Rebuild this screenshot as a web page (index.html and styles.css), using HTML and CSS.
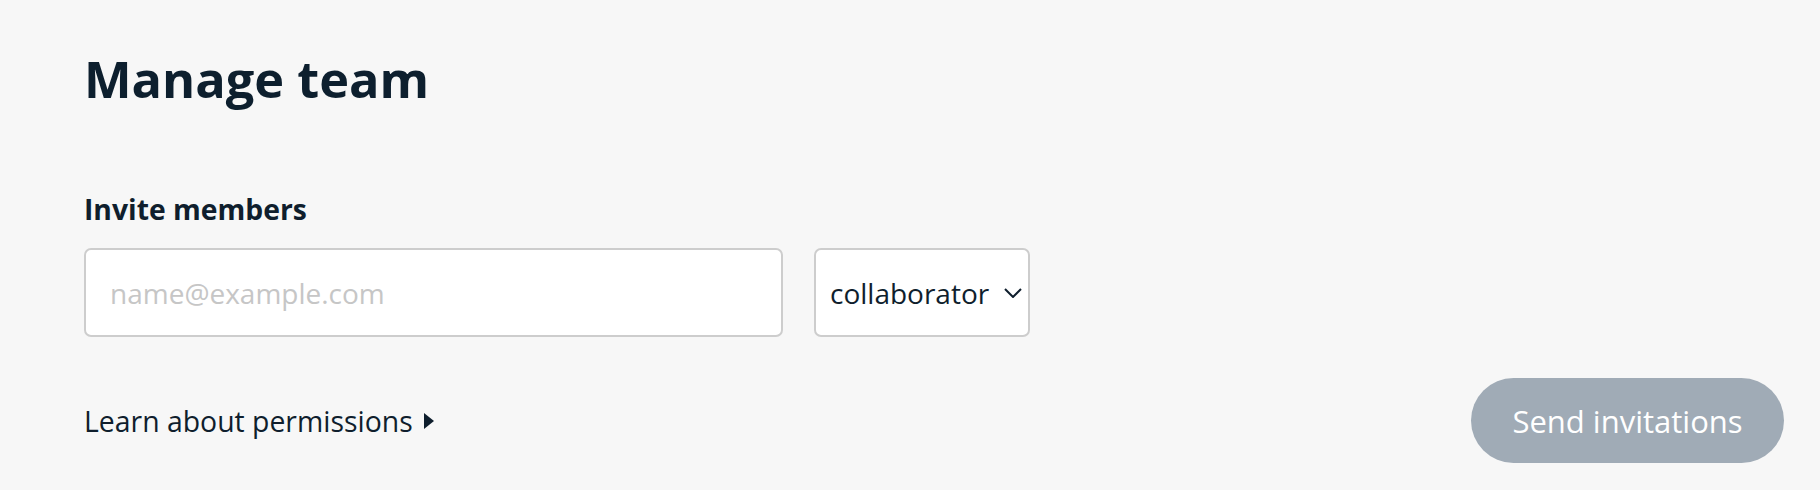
FILE: index.html
```html
<!DOCTYPE html>
<html lang="en">
<head>
<meta charset="utf-8">
<title>Manage team</title>
<link rel="stylesheet" href="styles.css">
</head>
<body>
<main class="page">
  <h1 class="title">Manage team</h1>
  <form class="invite">
    <label class="label" for="email">Invite members</label>
    <div class="fields">
      <input class="email" id="email" type="email" placeholder="name@example.com">
      <div class="role">
        <select class="role-select">
          <option>collaborator</option>
          <option>admin</option>
        </select>
        <svg class="chevron" width="18" height="10" viewBox="0 0 18 10" aria-hidden="true">
          <path d="M1 1 L9 9 L17 1" fill="none" stroke="#0f1e2d" stroke-width="2"/>
        </svg>
      </div>
    </div>
    <div class="actions">
      <a class="learn" href="#">Learn about permissions
        <svg class="caret" width="10" height="16" viewBox="0 0 10 16" aria-hidden="true">
          <polygon points="0,0 10,8 0,16" fill="#0f1e2d"/>
        </svg>
      </a>
      <button class="send" type="button" disabled>Send invitations</button>
    </div>
  </form>
</main>
</body>
</html>
```

FILE: styles.css
```css
html, body {
  margin: 0;
  background: #f7f7f7;
}
body {
  font-family: "Open Sans", "Liberation Sans", sans-serif;
  color: #0f1e2d;
}
.page {
  padding: 44px 36px 0 84px;
}
.title {
  margin: 0 0 77px;
  font-size: 50.5px;
  line-height: normal;
  font-weight: 700;
  color: #0d1f2e;
}
.invite {
  display: flex;
  flex-direction: column;
}
.label {
  font-size: 28.3px;
  font-weight: 700;
  line-height: normal;
  margin-bottom: 20px;
}
.fields {
  display: flex;
  gap: 31px;
}
.email {
  box-sizing: border-box;
  width: 699px;
  height: 89px;
  border: 2px solid #cdcdcd;
  border-radius: 7px;
  background: #fff;
  padding: 0 24px;
  font-family: inherit;
  font-size: 28px;
  color: #0f1e2d;
  outline: none;
}
.email::placeholder {
  color: #c6c6c6;
}
.role {
  box-sizing: border-box;
  width: 216px;
  height: 89px;
  border: 2px solid #cdcdcd;
  border-radius: 7px;
  background: #fff;
  display: flex;
  align-items: center;
  padding: 0 6px 0 14px;
}
.role-select {
  appearance: none;
  -webkit-appearance: none;
  border: 0;
  background: transparent;
  font-family: inherit;
  font-size: 28px;
  color: #0f1e2d;
  padding: 0;
  flex: 1;
  min-width: 0;
  outline: none;
}
.chevron {
  flex: none;
}
.actions {
  margin-top: 41px;
  display: flex;
  justify-content: space-between;
  align-items: center;
}
.learn {
  font-size: 28.4px;
  line-height: normal;
  color: #0f1e2d;
  text-decoration: none;
  display: flex;
  align-items: center;
  gap: 11px;
}
.caret {
  margin-top: 1px;
}
.send {
  box-sizing: border-box;
  width: 313px;
  height: 85px;
  border: 0;
  border-radius: 43px;
  background: #a0abb6;
  color: #fff;
  font-family: inherit;
  font-size: 31px;
  padding: 0;
}
```
